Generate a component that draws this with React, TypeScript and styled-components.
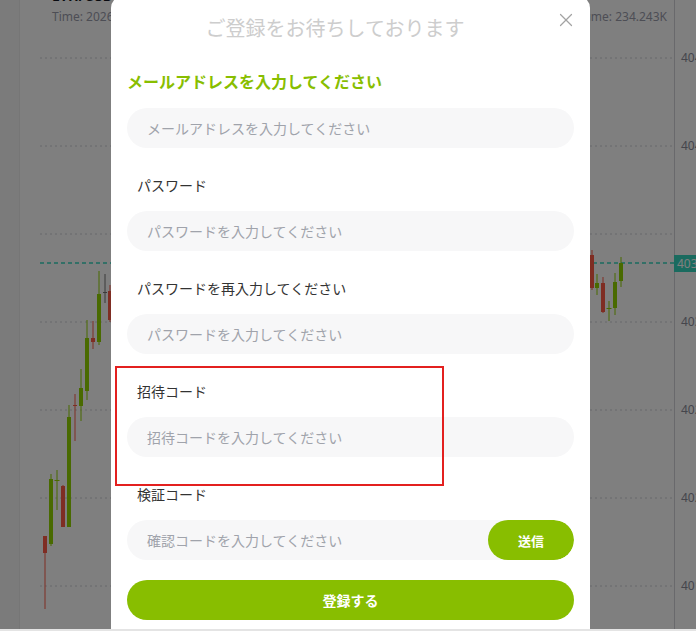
import styled, { createGlobalStyle } from "styled-components";
import { X } from "lucide-react";

const GREEN = "#88be00";

const GlobalStyle = createGlobalStyle`
  html, body {
    margin: 0;
    padding: 0;
    background: #e4e4e4;
    font-family: "Noto Sans", "Noto Sans CJK JP", sans-serif;
  }
`;

export const Stage = styled.div`
  position: relative;
  width: 696px;
  height: 629px;
  overflow: hidden;
  background: #fff;
`;

export const ChartLayout = styled.div`
  display: flex;
  height: 100%;
`;

export const Sidebar = styled.div`
  width: 20px;
  background: #f6f6f6;
  border-right: 1px solid #ececec;
  box-sizing: border-box;
`;

export const ChartArea = styled.div`
  position: relative;
  flex: 1;
`;

export const Legend = styled.div`
  position: absolute;
  top: -16px;
  left: 0;
  right: 0;
  padding: 0 29px 0 32px;
`;

export const Symbol = styled.div`
  font-size: 14px;
  font-weight: 700;
  line-height: 24px;
  color: #131722;
`;

export const LegendRow = styled.div`
  display: flex;
  justify-content: space-between;
  font-size: 12px;
  line-height: 18px;
  color: #9a9cab;
`;

export const Backdrop = styled.div`
  position: absolute;
  inset: 0;
  background: rgba(0, 0, 0, 0.5);
  display: flex;
  justify-content: center;
  align-items: flex-start;
  padding-left: 5px;
`;

export const Modal = styled.div`
  width: 479px;
  margin-top: -4px;
  background: #fff;
  border-radius: 12px;
  padding: 19px 16px 24px;
  box-sizing: border-box;
  display: flex;
  flex-direction: column;
  flex-shrink: 0;
`;

export const Header = styled.div`
  display: flex;
  align-items: flex-start;
`;

export const Title = styled.h2`
  flex: 1;
  margin: 0;
  text-align: center;
  font-size: 20px;
  font-weight: 400;
  line-height: 28px;
  color: #cdcdcd;
`;

export const CloseButton = styled.button`
  width: 34px;
  height: 22px;
  margin: -6px -3px 0 0;
  padding: 0;
  border: 0;
  background: none;
  display: flex;
  justify-content: flex-end;
  color: #a3a3a3;
  cursor: pointer;
`;

export const Heading = styled.div`
  margin-top: 27px;
  font-size: 16px;
  font-weight: 700;
  line-height: 24px;
  color: ${GREEN};
`;

export const Field = styled.div`
  margin-top: 27px;
`;

export const Label = styled.div`
  padding-left: 10px;
  font-size: 14px;
  line-height: 22px;
  color: #333;
`;

export const InputBox = styled.div`
  margin-top: 14px;
  height: 40px;
  border-radius: 20px;
  background: #f7f7f8;
  display: flex;
  align-items: center;
  padding-left: 20px;
  overflow: hidden;
`;

export const TextInput = styled.input`
  flex: 1;
  min-width: 0;
  height: 100%;
  padding: 0;
  border: 0;
  outline: none;
  background: transparent;
  font-family: inherit;
  font-size: 14px;
  color: #333;
  &::placeholder {
    color: #a0a3ab;
  }
`;

export const SendButton = styled.button`
  width: 86px;
  height: 40px;
  border: 0;
  border-radius: 20px;
  background: ${GREEN};
  color: #fff;
  font-family: inherit;
  font-size: 13px;
  font-weight: 700;
`;

export const SubmitButton = styled.button`
  margin-top: 20px;
  width: 100%;
  height: 40px;
  border: 0;
  border-radius: 20px;
  background: ${GREEN};
  color: #fff;
  font-family: inherit;
  font-size: 14px;
  font-weight: 700;
`;

export const Highlight = styled.div`
  position: absolute;
  left: 115px;
  top: 366px;
  width: 329px;
  height: 120px;
  border: 2px solid #e3201f;
  box-sizing: border-box;
  pointer-events: none;
`;

const UP = "#92d400";
const DOWN = "#ff5a46";
const FLAT = "#747474";

// cx, body top, body bottom, wick top, wick bottom, colour, body width
const candles: [number, number, number, number, number, string, number][] = [
  [45, 536, 553, 536, 609, DOWN, 4],
  [51, 479, 544, 474, 546, UP, 4],
  [57, 480, 481, 470, 510, UP, 5],
  [63, 486, 527, 485, 527, DOWN, 4],
  [69, 417, 527, 405, 527, UP, 4],
  [75, 405, 406, 394, 441, DOWN, 4],
  [81, 388, 406, 369, 421, UP, 4],
  [87, 338, 391, 320, 400, UP, 4],
  [93, 338, 342, 321, 349, DOWN, 4],
  [99, 294, 342, 271, 345, UP, 4],
  [105, 292, 293, 274, 303, FLAT, 4],
  [110, 291, 320, 285, 322, DOWN, 4],
  [592, 255, 288, 250, 290, DOWN, 4],
  [597, 283, 288, 274, 295, UP, 4],
  [603, 283, 312, 277, 313, DOWN, 4],
  [609, 308, 309, 301, 321, UP, 5],
  [615, 282, 308, 273, 315, UP, 4],
  [621, 263, 281, 257, 287, UP, 4],
];

const grid = [
  { y: 58, label: "4045.00" },
  { y: 146, label: "4040.00" },
  { y: 234, label: "" },
  { y: 322, label: "4030.00" },
  { y: 410, label: "4025.00" },
  { y: 498, label: "4020.00" },
  { y: 586, label: "4015.00" },
];

function CandleChart() {
  return (
    <svg
      width={676}
      height={629}
      viewBox="20 0 676 629"
      style={{ display: "block" }}
    >
      {grid.map((g) => (
        <g key={g.y}>
          <line
            x1={40}
            x2={674}
            y1={g.y}
            y2={g.y}
            stroke="#cfd0d6"
            strokeDasharray="2 3"
          />
          {g.label && (
            <text
              x={681}
              y={g.y + 4}
              fontSize={12}
              fill="#8a8c99"
              fontFamily="Noto Sans, sans-serif"
            >
              {g.label}
            </text>
          )}
        </g>
      ))}
      <line x1={674.5} x2={674.5} y1={0} y2={629} stroke="#d2d3d8" />
      <line
        x1={40}
        x2={674}
        y1={263}
        y2={263}
        stroke="#34d6bf"
        strokeWidth={1.3}
        strokeDasharray="4 3"
      />
      <rect x={674} y={255} width={30} height={17} fill="#34d6bf" />
      <text
        x={677}
        y={268}
        fontSize={12}
        fill="#fff"
        fontFamily="Noto Sans, sans-serif"
      >
        4033.25
      </text>
      {candles.map(([cx, bt, bb, wt, wb, color, w], i) => (
        <g key={i}>
          <line x1={cx} x2={cx} y1={wt} y2={wb} stroke={color} strokeWidth={1} />
          <rect
            x={cx - w / 2}
            y={bt}
            width={w}
            height={Math.max(bb - bt, 1)}
            fill={color}
          />
        </g>
      ))}
    </svg>
  );
}

function App() {
  return (
    <>
      <GlobalStyle />
      <Stage>
        <ChartLayout>
          <Sidebar />
          <ChartArea>
            <CandleChart />
            <Legend>
              <Symbol>ETH/USDT · 15</Symbol>
              <LegendRow>
                <span>Time: 2026-01-12 14:15</span>
                <span>Volume: 234.243K</span>
              </LegendRow>
            </Legend>
          </ChartArea>
        </ChartLayout>
        <Backdrop>
          <Modal>
            <Header>
              <Title>ご登録をお待ちしております</Title>
              <CloseButton aria-label="close">
                <X size={22} strokeWidth={1.3} />
              </CloseButton>
            </Header>
            <Heading>メールアドレスを入力してください</Heading>
            <InputBox>
              <TextInput placeholder="メールアドレスを入力してください" />
            </InputBox>
            <Field>
              <Label>パスワード</Label>
              <InputBox>
                <TextInput type="password" placeholder="パスワードを入力してください" />
              </InputBox>
            </Field>
            <Field>
              <Label>パスワードを再入力してください</Label>
              <InputBox>
                <TextInput type="password" placeholder="パスワードを入力してください" />
              </InputBox>
            </Field>
            <Field>
              <Label>招待コード</Label>
              <InputBox>
                <TextInput placeholder="招待コードを入力してください" />
              </InputBox>
            </Field>
            <Field>
              <Label>検証コード</Label>
              <InputBox>
                <TextInput placeholder="確認コードを入力してください" />
                <SendButton>送信</SendButton>
              </InputBox>
            </Field>
            <SubmitButton>登録する</SubmitButton>
          </Modal>
        </Backdrop>
        <Highlight />
      </Stage>
    </>
  );
}

export default App;
